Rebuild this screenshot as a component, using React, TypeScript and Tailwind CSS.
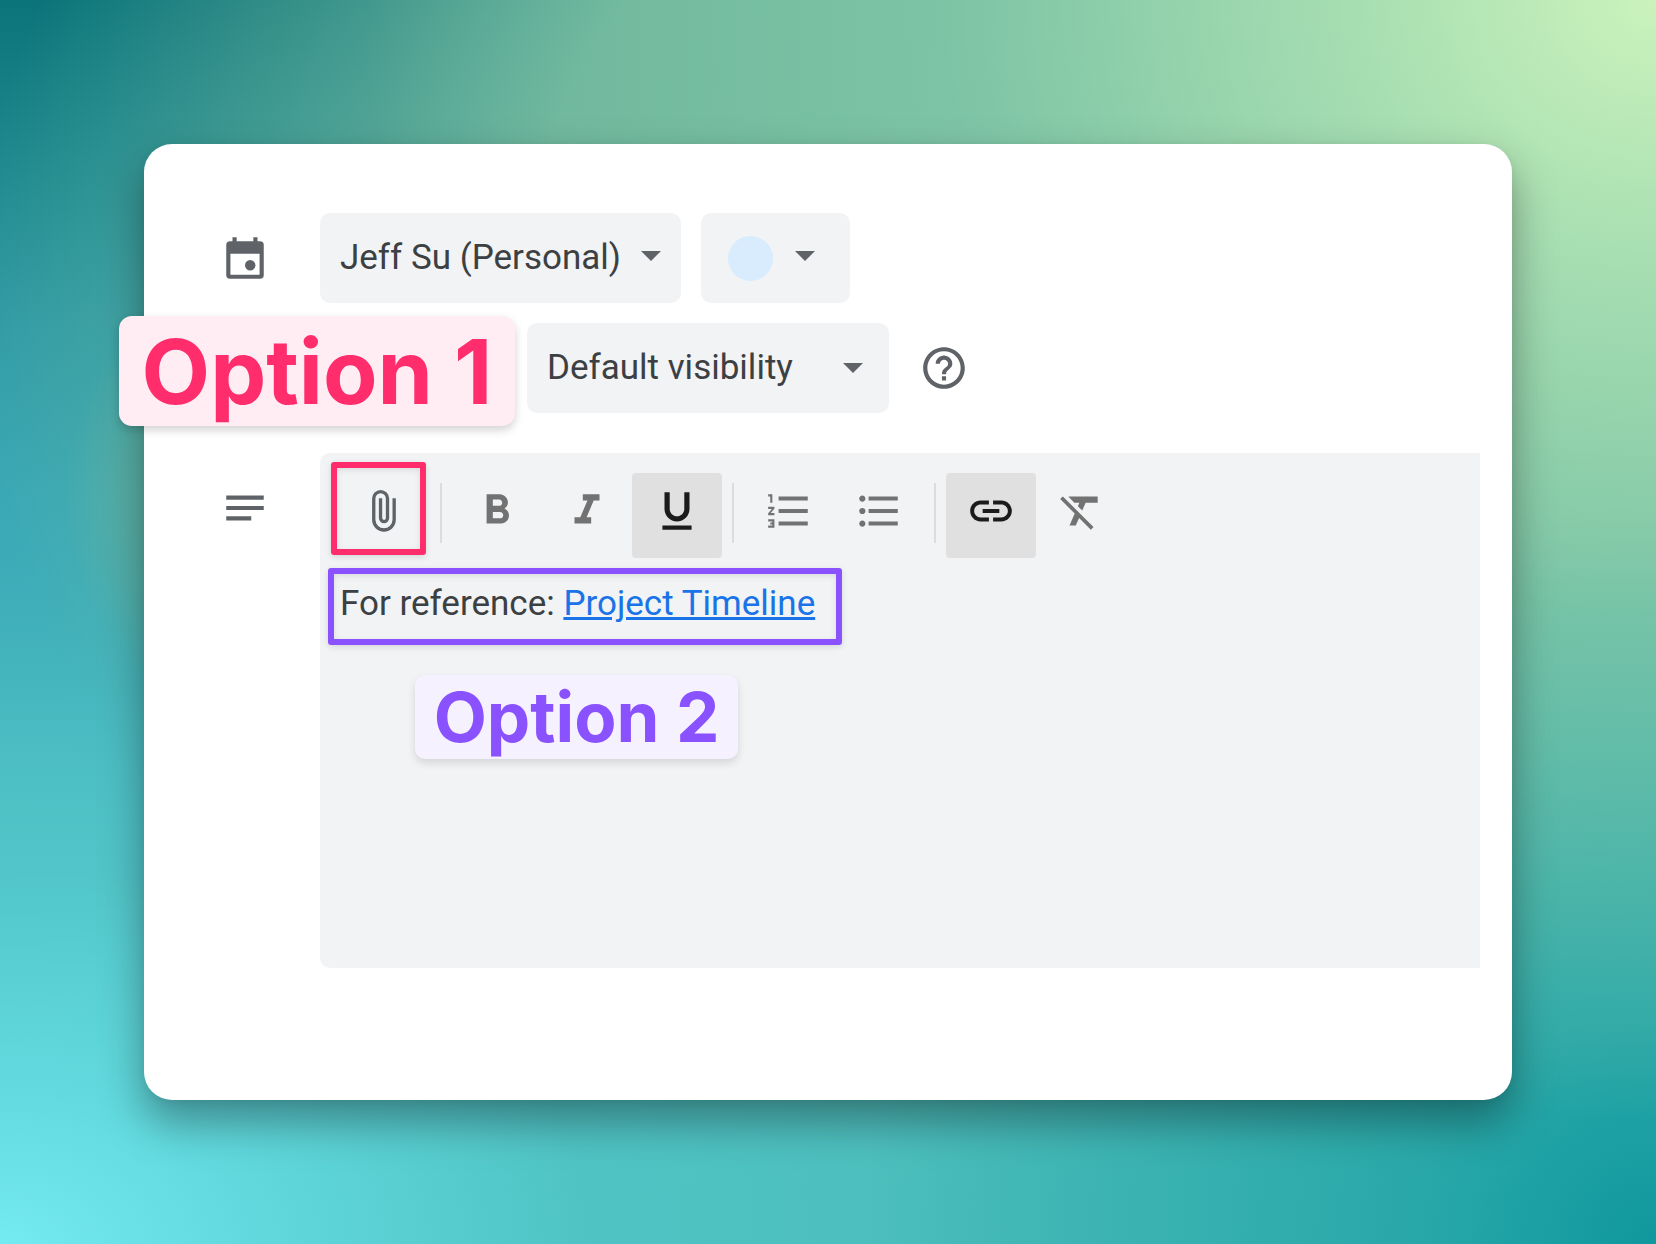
import type { ReactNode } from 'react'
import clsx from 'clsx'
import {
  MdFormatBold,
  MdFormatClear,
  MdFormatItalic,
  MdFormatListBulleted,
  MdFormatListNumbered,
  MdFormatUnderlined,
  MdHelpOutline,
  MdLink,
  MdNotes
} from 'react-icons/md'

function CalendarIcon() {
  return (
    <svg viewBox="0 0 24 24" fill="currentColor" className="size-[50px]" aria-hidden="true">
      <path
        fillRule="evenodd"
        d="M6 2h2v2h8V2h2v2h1.2A1.8 1.8 0 0 1 21 5.800V20.200A1.800 1.800 0 0 1 19.200 22H4.800A1.800 1.800 0 0 1 3 20.200V5.800A1.800 1.800 0 0 1 4.800 4H6zM5 10v10h14V10z"
      />
      <circle cx="14.500" cy="15.500" r="2.500" />
    </svg>
  )
}

function PaperclipIcon() {
  return (
    <svg viewBox="0 0 24 24" fill="none" stroke="currentColor" strokeWidth="1.6" className="size-[50px]" aria-hidden="true">
      <path d="M16.4 5.900V16.200a4.900 4.900 0 0 1-9.800 0V6a3.300 3.300 0 0 1 6.600 0v9.400a1.670 1.670 0 0 1-3.340 0V5.900" />
    </svg>
  )
}

function Caret({ className }: { className?: string }) {
  return (
    <svg
      viewBox="0 0 20 10"
      className={clsx('h-[10px] w-5 shrink-0 text-[#5f6368]', className)}
      fill="currentColor"
      aria-hidden="true"
    >
      <path d="M0 0h20L10 10z" />
    </svg>
  )
}

function ToolButton({ label, active, children }: { label: string; active?: boolean; children: ReactNode }) {
  return (
    <button
      type="button"
      aria-label={label}
      aria-pressed={active}
      className={clsx(
        'flex h-[85px] w-[90px] items-start justify-center rounded pt-[13px]',
        active ? 'bg-[#e0e0e0] text-[#1b1b1b]' : 'text-[#727272]'
      )}
    >
      {children}
    </button>
  )
}

function Divider() {
  return <div className="mx-[10px] mt-[10px] h-[60px] w-[2px] bg-[#dadce0]" />
}

const selectClass = 'appearance-none bg-transparent text-[35px] leading-[42px] text-[#3c4043] outline-none'

export default function App() {
  return (
    <div className="flex min-h-screen flex-col bg-[radial-gradient(78%_90%_at_100%_0%,#cbf3bc_0%,#b4e7b6cc_24%,#8dd3ae80_55%,#7cc6a600_100%),radial-gradient(60%_50%_at_0%_100%,#74eaf1_0%,#66e0e6cc_25%,#55cbd066_60%,#50c3c900_100%),radial-gradient(48%_60%_at_100%_100%,#0f989d_0%,#20a2a4cc_30%,#45b3a600_100%),radial-gradient(18%_22%_at_21%_40%,#6bb39b_0%,#6bb39bcc_55%,#6bb39b00_95%),linear-gradient(180deg,#4bbdbb00_45%,#4bbdbb_95%),radial-gradient(104%_88%_at_100%_25%,#6eb89e_0%,#6bb39b_66%,#6bb39b80_82%,#6bb39b00_98%),linear-gradient(180deg,#0b747a_0%,#218e95_17%,#2f9ba6_26%,#3aa9b5_40%,#42b1bb_55%,#55c8d0_73%,#66dee5_90%,#74e9f1_100%)] p-36 font-[Roboto,sans-serif]">
      <main className="flex grow flex-col rounded-[28px] bg-white pt-[69px] pr-8 pb-[132px] pl-[76px] shadow-[0_22px_44px_rgba(0,0,0,0.36),0_2px_10px_rgba(0,0,0,0.06)]">
        {/* Calendar and colour */}
        <div className="flex items-center text-[#5f6368]">
          <CalendarIcon />
          <div className="ml-[50px] flex gap-5">
            <label className="flex h-[90px] w-[361px] items-center justify-between rounded-[10px] bg-[#f1f3f4] px-5">
              <select aria-label="Calendar" className={selectClass}>
                <option>Jeff Su (Personal)</option>
              </select>
              <Caret className="mb-1" />
            </label>
            <button
              type="button"
              aria-label="Event colour"
              className="flex h-[90px] w-[149px] items-center gap-[22px] rounded-[10px] bg-[#f1f3f4] pl-[27px]"
            >
              <span className="size-[45px] rounded-full bg-[#d8ecfe]" />
              <Caret className="mb-1" />
            </button>
          </div>
        </div>

        {/* Visibility */}
        <div className="relative mt-5 flex items-center pl-[307px]">
          <label className="flex h-[90px] w-[362px] items-center justify-between rounded-[10px] bg-[#f1f3f4] pr-[26px] pl-5">
            <select aria-label="Visibility" className={selectClass}>
              <option>Default visibility</option>
            </select>
            <Caret />
          </label>
          <button type="button" aria-label="Help" className="ml-[30px] text-[#5f6368]">
            <MdHelpOutline className="size-[50px]" />
          </button>
          <div className="absolute -top-[7px] -left-[101px] flex h-[110px] w-[396px] items-center justify-center rounded-[13px] bg-[#ffedf3] font-[Inter,sans-serif] text-[89px] leading-none font-bold whitespace-nowrap text-[#ff2d6b] shadow-[0_4px_10px_rgba(0,0,0,0.18)]">
            Option 1
          </div>
        </div>

        {/* Description */}
        <div className="mt-10 flex grow">
          <MdNotes className="mt-[30px] size-[50px] shrink-0 text-[#5f6368]" />
          <div className="ml-[50px] grow rounded-l-[10px] bg-[#f1f3f4]">
            <div className="flex px-5 pt-5">
              <div className="relative">
                <ToolButton label="Attach file">
                  <span className="text-[#5f6368]">
                    <PaperclipIcon />
                  </span>
                </ToolButton>
                <div className="pointer-events-none absolute -top-[11px] -left-[9px] h-[93px] w-[95px] rounded-[3px] border-6 border-[#ff2d6b] shadow-[0_2px_6px_rgba(0,0,0,0.12),inset_0_2px_6px_rgba(0,0,0,0.1)]" />
              </div>
              <Divider />
              <ToolButton label="Bold">
                <MdFormatBold className="size-[50px]" />
              </ToolButton>
              <ToolButton label="Italic">
                <MdFormatItalic className="size-[50px]" />
              </ToolButton>
              <ToolButton label="Underline" active>
                <MdFormatUnderlined className="size-[50px]" />
              </ToolButton>
              <Divider />
              <ToolButton label="Numbered list">
                <MdFormatListNumbered className="size-[50px]" />
              </ToolButton>
              <ToolButton label="Bulleted list">
                <MdFormatListBulleted className="size-[50px]" />
              </ToolButton>
              <Divider />
              <ToolButton label="Insert link" active>
                <MdLink className="size-[50px]" />
              </ToolButton>
              <ToolButton label="Remove formatting">
                <MdFormatClear className="size-[50px]" />
              </ToolButton>
            </div>

            <div className="mt-[10px] ml-2 h-[77px] w-[514px] rounded-[3px] border-6 border-[#8a52ff] pt-[9px] pl-[6px] text-[35px] leading-[42px] whitespace-nowrap text-[#3c4043] shadow-[0_2px_6px_rgba(0,0,0,0.12),inset_0_2px_6px_rgba(0,0,0,0.1)]">
              For reference:{' '}
              <a href="#timeline" className="text-[#1a73e8] underline">
                Project Timeline
              </a>
            </div>

            <div className="mt-[30px] ml-[95px] flex h-[84px] w-[323px] items-center justify-center rounded-[10px] bg-[#f6f1ff] font-[Inter,sans-serif] text-[69px] leading-none font-bold whitespace-nowrap text-[#8a52ff] shadow-[0_4px_8px_rgba(0,0,0,0.12)]">
              Option 2
            </div>
          </div>
        </div>
      </main>
    </div>
  )
}
